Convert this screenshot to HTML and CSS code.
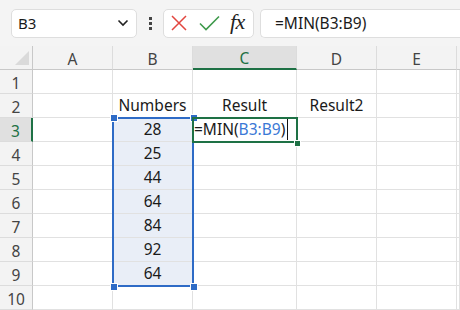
FILE: index.html
```html
<!DOCTYPE html>
<html>
<head>
<meta charset="utf-8">
<link rel="stylesheet" href="styles.css">
</head>
<body>
<div class="toolbar">
  <div class="namebox">
    <span class="namebox-text">B3</span>
    <svg class="chev" width="12" height="8" viewBox="0 0 12 8"><path d="M1.5 1.5 L6 6 L10.5 1.5" fill="none" stroke="#222" stroke-width="1.6"/></svg>
  </div>
  <div class="dots"><span></span><span></span><span></span></div>
  <div class="fbtns">
    <svg width="16" height="16" viewBox="0 0 16 16"><path d="M1 1 L15 15 M15 1 L1 15" stroke="#e2463f" stroke-width="1.5" fill="none"/></svg>
    <svg width="21" height="16" viewBox="0 0 21 16"><path d="M1 8.5 L7 14.5 L20 1.5" stroke="#3f9a4c" stroke-width="1.6" fill="none"/></svg>
    <span class="fx">fx</span>
  </div>
  <div class="fbar">=MIN(B3:B9)</div>
</div>

<div class="sheet">
  <div class="hd corner"><span class="tri"></span></div>
  <div class="hd col">A</div>
  <div class="hd col">B</div>
  <div class="hd col sel">C</div>
  <div class="hd col">D</div>
  <div class="hd col">E</div>
  <div class="hd col last"></div>

  <div class="hd row">1</div><div class="c"></div><div class="c"></div><div class="c"></div><div class="c"></div><div class="c"></div><div class="c"></div>
  <div class="hd row">2</div><div class="c"></div><div class="c ctr">Numbers</div><div class="c ctr">Result</div><div class="c ctr">Result2</div><div class="c"></div><div class="c"></div>
  <div class="hd row rsel">3</div><div class="c"></div><div class="c ctr rng">28</div><div class="c edit"><span>=MIN(</span><span class="ref">B3:B9</span><span>)</span><span class="caret"></span></div><div class="c"></div><div class="c"></div><div class="c"></div>
  <div class="hd row">4</div><div class="c"></div><div class="c ctr rng">25</div><div class="c"></div><div class="c"></div><div class="c"></div><div class="c"></div>
  <div class="hd row">5</div><div class="c"></div><div class="c ctr rng">44</div><div class="c"></div><div class="c"></div><div class="c"></div><div class="c"></div>
  <div class="hd row">6</div><div class="c"></div><div class="c ctr rng">64</div><div class="c"></div><div class="c"></div><div class="c"></div><div class="c"></div>
  <div class="hd row">7</div><div class="c"></div><div class="c ctr rng">84</div><div class="c"></div><div class="c"></div><div class="c"></div><div class="c"></div>
  <div class="hd row">8</div><div class="c"></div><div class="c ctr rng">92</div><div class="c"></div><div class="c"></div><div class="c"></div><div class="c"></div>
  <div class="hd row">9</div><div class="c"></div><div class="c ctr rng">64</div><div class="c"></div><div class="c"></div><div class="c"></div><div class="c"></div>
  <div class="hd row">10</div><div class="c"></div><div class="c"></div><div class="c"></div><div class="c"></div><div class="c"></div><div class="c"></div>

  <div class="range-box"></div>
  <div class="h h-tl"></div><div class="h h-tr"></div><div class="h h-bl"></div><div class="h h-br"></div>
  <div class="active-box"></div>
  <div class="gh"></div>
</div>
</body>
</html>
```

FILE: styles.css
```css
* { box-sizing: border-box; }
html, body { margin: 0; padding: 0; }
body {
  width: 460px;
  height: 310px;
  overflow: hidden;
  background: #ffffff;
  font-family: "Noto Sans", "Open Sans", sans-serif;
  color: #1a1a1a;
}
.toolbar {
  height: 46px;
  background: #f4f4f4;
  display: flex;
  align-items: center;
  padding: 0 0 0 11px;
}
.namebox {
  width: 126px;
  height: 29px;
  background: #fff;
  border: 1px solid #dedede;
  border-radius: 5px;
  display: flex;
  align-items: center;
  justify-content: space-between;
  padding: 0 7px 0 6px;
  font-size: 15px;
}
.namebox-text { color: #1a1a1a; }
.dots {
  width: 26px;
  display: flex;
  flex-direction: column;
  align-items: center;
  gap: 2px;
}
.dots span { width: 3px; height: 3px; background: #444; display: block; }
.fbtns {
  width: 91px;
  height: 29px;
  background: #fff;
  border: 1px solid #dedede;
  border-radius: 5px;
  display: flex;
  align-items: center;
  padding: 0 0 0 7px;
  gap: 12px;
}
.fx {
  font-family: "Liberation Serif", serif;
  font-style: italic;
  font-size: 22px;
  color: #222;
  margin-left: -2px;
  margin-top: -2px;
  letter-spacing: -0.5px;
}
.fbar {
  margin-left: 6px;
  flex: 1;
  height: 29px;
  background: #fff;
  border: 1px solid #dedede;
  border-right: none;
  border-radius: 5px 0 0 5px;
  display: flex;
  align-items: center;
  padding-left: 14px;
  font-size: 15.5px;
  color: #1a1a1a;
}
.sheet {
  position: relative;
  display: grid;
  grid-template-columns: 33px 80px 80px 104px 80px 80px 1fr;
  grid-template-rows: repeat(11, 24px);
  font-size: 15.5px;
}
.hd {
  background: #f3f3f3;
  color: #444;
  display: flex;
  align-items: center;
  justify-content: center;
}
.corner {
  border-right: 1px solid #c8c8c8;
  border-bottom: 1px solid #c8c8c8;
  position: relative;
}
.tri {
  position: absolute;
  right: 3px;
  bottom: 4px;
  width: 0;
  height: 0;
  border-left: 14px solid transparent;
  border-bottom: 14px solid #dadada;
}
.col {
  border-right: 1px solid #dcdcdc;
  border-bottom: 1px solid #c8c8c8;
  padding-top: 2px;
}
.col.last { border-right: none; }
.col.sel {
  background: #e0e0e0;
  color: #1e7145;
  border-bottom: 2px solid #1e7145;
}
.row {
  border-right: 1px solid #c8c8c8;
  border-bottom: 1px solid #dcdcdc;
  padding-top: 2px;
}
.row.rsel {
  background: #e0e0e0;
  color: #1e7145;
  border-right: 2px solid #1e7145;
}
.c {
  border-right: 1px solid #e1e1e1;
  border-bottom: 1px solid #e1e1e1;
  display: flex;
  align-items: flex-end;
  padding-bottom: 1px;
  white-space: nowrap;
  color: #1a1a1a;
}
.ctr { justify-content: center; }
.rng { background: #e9eef7; }
.edit {
  overflow: visible;
  padding-left: 1px;
  align-items: flex-end;
}
.ref { color: #3a78d6; }
.caret {
  display: inline-block;
  width: 1px;
  height: 21px;
  background: #111;
  margin-left: 2px;
  margin-bottom: 0;
}
.range-box {
  position: absolute;
  left: 112px;
  top: 71px;
  width: 82px;
  height: 170px;
  border: 2px solid #2e6bc6;
  pointer-events: none;
}
.h {
  position: absolute;
  width: 6px;
  height: 6px;
  background: #2e6bc6;
  border: 1px solid #fff;
  box-sizing: content-box;
}
.h-tl { left: 110px; top: 68px; }
.h-tr { left: 190px; top: 68px; }
.h-bl { left: 110px; top: 237px; }
.h-br { left: 190px; top: 237px; }
.active-box {
  position: absolute;
  left: 192px;
  top: 71px;
  width: 106px;
  height: 26px;
  border: 2px solid #1e7145;
}
.gh {
  position: absolute;
  left: 294px;
  top: 94px;
  width: 5px;
  height: 5px;
  background: #1e7145;
  border: 1px solid #fff;
  box-sizing: content-box;
}
```
